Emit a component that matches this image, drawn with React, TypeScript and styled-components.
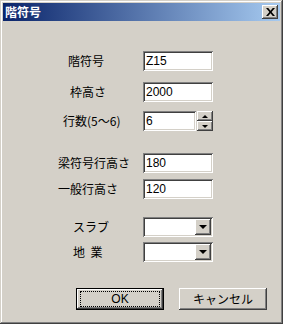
import styled, { createGlobalStyle } from 'styled-components';

const GlobalStyle = createGlobalStyle`
  html, body {
    margin: 0;
    padding: 0;
    background: #d4d0c8;
  }
  body {
    font-family: "Noto Sans CJK JP", "Liberation Sans", sans-serif;
    font-size: 12px;
  }
`;

const raised = `
  box-shadow: inset -1px -1px #404040, inset 1px 1px #ffffff,
    inset -2px -2px #808080, inset 2px 2px #d4d0c8;
`;
const sunken = `
  box-shadow: inset 1px 1px #808080, inset -1px -1px #ffffff,
    inset 2px 2px #404040, inset -2px -2px #d4d0c8;
`;

export default function App() {
  return (
    <>
      <GlobalStyle />
      <Window>
        <TitleBar>
          <Title>階符号</Title>
          <CloseButton aria-label="close">
            <svg width="9" height="8" viewBox="0 0 9 8">
              <path d="M0 0h2.2l2.3 2.8L6.8 0H9L5.6 4 9 8H6.8L4.5 5.2 2.2 8H0l3.4-4z" fill="#000" />
            </svg>
          </CloseButton>
        </TitleBar>
        <Body>
          <Row $mt={30}>
            <Label $indent={65}>階符号</Label>
            <TextBox>Z15</TextBox>
          </Row>
          <Row $mt={11}>
            <Label $indent={67}>枠高さ</Label>
            <TextBox>2000</TextBox>
          </Row>
          <Row $mt={9}>
            <Label $indent={60}>行数(5～6)</Label>
            <TextBox $w={53}>6</TextBox>
            <Spinner>
              <SpinButton>
                <Arrow $up />
              </SpinButton>
              <SpinButton>
                <Arrow />
              </SpinButton>
            </Spinner>
          </Row>
          <Row $mt={22}>
            <Label $indent={55}>梁符号行高さ</Label>
            <TextBox>180</TextBox>
          </Row>
          <Row $mt={6}>
            <Label $indent={55}>一般行高さ</Label>
            <TextBox>120</TextBox>
          </Row>
          <Row $mt={18}>
            <Label $indent={70}>スラブ</Label>
            <Combo>
              <DropButton>
                <Arrow $big />
              </DropButton>
            </Combo>
          </Row>
          <Row $mt={5}>
            <Label $indent={70}>地&nbsp;&nbsp;業</Label>
            <Combo>
              <DropButton>
                <Arrow $big />
              </DropButton>
            </Combo>
          </Row>
          <Buttons>
            <PushButton $default>
              <Focus>OK</Focus>
            </PushButton>
            <PushButton>キャンセル</PushButton>
          </Buttons>
        </Body>
      </Window>
    </>
  );
}

const Window = styled.div`
  width: 283px;
  height: 324px;
  box-sizing: border-box;
  padding: 3px;
  background: #d4d0c8;
  box-shadow: inset -1px -1px #404040, inset 1px 1px #d4d0c8,
    inset -2px -2px #808080, inset 2px 2px #ffffff;
  display: flex;
  flex-direction: column;
`;

const TitleBar = styled.div`
  height: 18px;
  display: flex;
  align-items: center;
  justify-content: space-between;
  padding: 0 2px 0 2px;
  background: linear-gradient(to right, #0a246a, #a6caf0);
`;

const Title = styled.span`
  color: #ffffff;
  font-weight: bold;
  font-size: 12px;
  line-height: 14px;
`;

const CloseButton = styled.div`
  width: 16px;
  height: 14px;
  box-sizing: border-box;
  background: #d4d0c8;
  ${raised}
  display: flex;
  align-items: center;
  justify-content: center;
  padding-bottom: 1px;
`;

const Body = styled.div`
  display: flex;
  flex-direction: column;
`;

const Row = styled.div<{ $mt: number }>`
  display: flex;
  align-items: center;
  height: 20px;
  margin-top: ${(p) => p.$mt}px;
`;

const Label = styled.div<{ $indent: number }>`
  width: 140px;
  box-sizing: border-box;
  padding-left: ${(p) => p.$indent}px;
  font-size: 12px;
  line-height: 14px;
  color: #000;
  white-space: nowrap;
`;

const TextBox = styled.div<{ $w?: number }>`
  width: ${(p) => p.$w ?? 70}px;
  height: 20px;
  box-sizing: border-box;
  padding: 3px 2px 0 3px;
  background: #ffffff;
  ${sunken}
  font-family: "Liberation Sans", "Noto Sans CJK JP", sans-serif;
  font-size: 12px;
  line-height: 14px;
  color: #000;
`;

const Spinner = styled.div`
  margin-left: 1px;
  width: 16px;
  height: 20px;
  display: flex;
  flex-direction: column;
`;

const SpinButton = styled.div`
  flex: 1;
  background: #d4d0c8;
  ${raised}
  display: flex;
  align-items: center;
  justify-content: center;
`;

const Arrow = styled.span<{ $up?: boolean; $big?: boolean }>`
  width: 0;
  height: 0;
  border-left: ${(p) => (p.$big ? 4 : 3)}px solid transparent;
  border-right: ${(p) => (p.$big ? 4 : 3)}px solid transparent;
  ${(p) =>
    p.$up
      ? `border-bottom: 3px solid #000;`
      : `border-top: ${p.$big ? 4 : 3}px solid #000;`}
`;

const Combo = styled.div`
  width: 70px;
  height: 20px;
  box-sizing: border-box;
  padding: 2px;
  background: #ffffff;
  ${sunken}
  display: flex;
  justify-content: flex-end;
`;

const DropButton = styled.div`
  width: 16px;
  height: 16px;
  background: #d4d0c8;
  ${raised}
  display: flex;
  align-items: center;
  justify-content: center;
`;

const Buttons = styled.div`
  display: flex;
  gap: 15px;
  margin-top: 26px;
  padding-left: 73px;
`;

const PushButton = styled.div<{ $default?: boolean }>`
  width: 88px;
  height: 22px;
  box-sizing: border-box;
  background: #d4d0c8;
  ${(p) =>
    p.$default
      ? `box-shadow: inset 0 0 0 1px #000000, inset -2px -2px #404040, inset 2px 2px #ffffff, inset -3px -3px #808080;`
      : raised}
  display: flex;
  align-items: center;
  justify-content: center;
  font-size: 12px;
  line-height: 14px;
  color: #000;
`;

const Focus = styled.div`
  width: 78px;
  height: 14px;
  border: 1px dotted #000;
  display: flex;
  align-items: center;
  justify-content: center;
  font-family: "Liberation Sans", "Noto Sans CJK JP", sans-serif;
`;
